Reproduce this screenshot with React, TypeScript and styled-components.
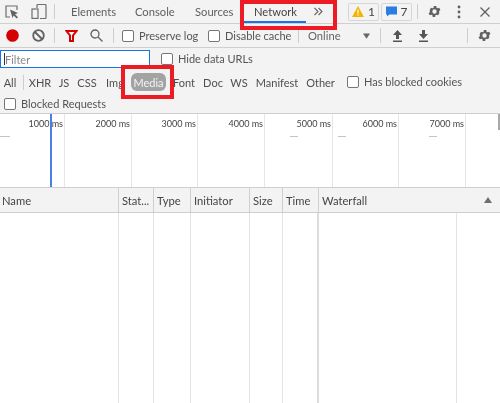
import React from "react";
import styled, { createGlobalStyle } from "styled-components";

const Global = createGlobalStyle`
  html, body { margin: 0; padding: 0; background: #fff; }
  body { font-family: Lato, "Open Sans", "Liberation Sans", sans-serif; font-size: 11px; color: #555; }
  * { box-sizing: border-box; }
`;

const Page = styled.div`
  position: relative;
  width: 500px;
  height: 403px;
  overflow: hidden;
  background: #fff;
  display: flex;
  flex-direction: column;
  filter: blur(0.3px);
`;

const Bar = styled.div`
  height: 24px;
  flex: none;
  display: flex;
  align-items: center;
  background: #f3f3f3;
  border-bottom: 1px solid #cfcfcf;
  overflow: hidden;
`;

const IconButton = styled.span<{ $w: number }>`
  width: ${(p) => p.$w}px;
  flex: none;
  display: flex;
  align-items: center;
  justify-content: center;
`;

const Sep = styled.span<{ $ml?: number; $mr?: number }>`
  width: 1px;
  height: 15px;
  flex: none;
  background: #cdcdcd;
  margin-left: ${(p) => p.$ml ?? 0}px;
  margin-right: ${(p) => p.$mr ?? 0}px;
`;

const Tab = styled.span<{ $w: number; $pad: number; $active?: boolean }>`
  width: ${(p) => p.$w}px;
  height: 23px;
  flex: none;
  display: flex;
  align-items: center;
  padding-left: ${(p) => p.$pad}px;
  padding-top: 2px;
  font-size: 11.2px;
  color: ${(p) => (p.$active ? "#444" : "#5f5f5f")};
  border-bottom: 2px solid ${(p) => (p.$active ? "#1a73e8" : "transparent")};
`;

const Spacer = styled.span<{ $w: number }>`
  width: ${(p) => p.$w}px;
  flex: none;
`;

const Badge = styled.span`
  width: 31px;
  height: 18px;
  flex: none;
  display: flex;
  align-items: center;
  justify-content: center;
  gap: 4px;
  border: 1px solid #d6d6d6;
  border-radius: 2px;
  margin-right: 2px;
  font-size: 12px;
  color: #444;
`;

const Check = styled.span`
  width: 12px;
  height: 12px;
  flex: none;
  border: 1px solid #767676;
  border-radius: 2px;
  background: #fff;
`;

const CheckLabel = styled.label<{ $w?: number; $ml?: number }>`
  display: flex;
  align-items: center;
  gap: 5px;
  flex: none;
  width: ${(p) => (p.$w ? `${p.$w}px` : "auto")};
  margin-left: ${(p) => p.$ml ?? 0}px;
  font-size: 11px;
  line-height: 16px;
  color: #555;
  white-space: nowrap;
`;

const Throttle = styled.span`
  width: 55px;
  margin-left: 9px;
  flex: none;
  font-size: 11.2px;
  color: #666;
`;

const Filters = styled.div`
  height: 66px;
  flex: none;
  background: #f3f3f3;
  border-bottom: 1px solid #cfcfcf;
  display: flex;
  flex-direction: column;
`;

const FilterRow = styled.div<{ $h: number; $pad?: number }>`
  height: ${(p) => p.$h}px;
  flex: none;
  display: flex;
  align-items: center;
  padding-left: ${(p) => p.$pad ?? 0}px;
`;

const FilterInput = styled.div`
  width: 150px;
  height: 18px;
  flex: none;
  display: flex;
  align-items: center;
  background: #fff;
  border: 1px solid #1a73e8;
  font-size: 11px;
  padding-left: 3px;
  color: #8a8a8a;
  margin-right: 11px;
`;

const Caret = styled.span`
  width: 1px;
  height: 12px;
  flex: none;
  background: #333;
`;

const Chip = styled.span<{ $w: number; $active?: boolean }>`
  width: ${(p) => p.$w}px;
  height: 18px;
  flex: none;
  display: flex;
  align-items: center;
  justify-content: center;
  font-size: 11px;
  white-space: nowrap;
  border-radius: 6px;
  color: ${(p) => (p.$active ? "#f4f4f4" : "#4f4f4f")};
  background: ${(p) => (p.$active ? "#a3a3a3" : "transparent")};
`;

const Overview = styled.div`
  height: 74px;
  flex: none;
  position: relative;
  display: flex;
  border-bottom: 1px solid #cfcfcf;
  background: #fff;
`;

const Tick = styled.div<{ $w: number }>`
  width: ${(p) => p.$w}px;
  flex: none;
  border-right: 1px solid #e6e6e6;
  text-align: right;
  padding: 3px 1px 0 0;
  font-size: 9px;
  line-height: 14px;
  color: #444;
`;

const Dash = styled.span<{ $x: number; $w: number }>`
  position: absolute;
  top: 22px;
  left: ${(p) => p.$x}px;
  width: ${(p) => p.$w}px;
  height: 1px;
  background: #c4c4c4;
`;

const Cursor = styled.div`
  position: absolute;
  left: 50px;
  top: 0;
  bottom: 0;
  width: 2px;
  background: #4a7fe8;
`;

const Thumb = styled.div`
  position: absolute;
  right: 0;
  top: 0;
  width: 2px;
  height: 16px;
  background: #a8a8a8;
`;

const Header = styled.div`
  height: 25px;
  flex: none;
  display: flex;
  background: #f3f3f3;
  border-bottom: 1px solid #cfcfcf;
`;

const HeaderCell = styled.div<{ $w: number; $pad?: number }>`
  width: ${(p) => p.$w}px;
  flex: none;
  display: flex;
  align-items: center;
  padding-left: ${(p) => p.$pad ?? 3}px;
  border-right: 1px solid #cfcfcf;
  font-size: 11.2px;
  color: #444;
  white-space: nowrap;
`;

const WaterfallCell = styled(HeaderCell)`
  position: relative;
  border-right: none;
`;

const SortMark = styled.span`
  position: absolute;
  right: 9px;
  top: 9px;
  width: 0;
  height: 0;
  border-left: 4px solid transparent;
  border-right: 4px solid transparent;
  border-bottom: 6px solid #6e6e6e;
`;

const Body = styled.div`
  flex: 1;
  display: flex;
`;

const BodyCol = styled.div<{ $w: number; $thick?: boolean }>`
  width: ${(p) => p.$w}px;
  flex: none;
  border-right: ${(p) => (p.$thick ? "2px solid #dcdcdc" : "1px solid #e4e4e4")};
`;

const RedBox = styled.div<{ $x: number; $y: number; $w: number; $h: number }>`
  position: absolute;
  left: ${(p) => p.$x}px;
  top: ${(p) => p.$y}px;
  width: ${(p) => p.$w}px;
  height: ${(p) => p.$h}px;
  border: 4px solid #ed1c24;
`;

const ticks = [
  { w: 65, label: "1000 ms" },
  { w: 67, label: "2000 ms" },
  { w: 66, label: "3000 ms" },
  { w: 67, label: "4000 ms" },
  { w: 68, label: "5000 ms" },
  { w: 66, label: "6000 ms" },
  { w: 67, label: "7000 ms" },
];

const cols = [
  { w: 119, label: "Name", pad: 2 },
  { w: 35, label: "Stat..." },
  { w: 37, label: "Type" },
  { w: 59, label: "Initiator" },
  { w: 33, label: "Size" },
  { w: 36, label: "Time" },
];

const chips = [
  { w: 26, label: "XHR" },
  { w: 22, label: "JS" },
  { w: 24, label: "CSS" },
  { w: 32, label: "Img" },
  { w: 35, label: "Media", active: true },
  { w: 36, label: "Font" },
  { w: 22, label: "Doc" },
  { w: 30, label: "WS" },
  { w: 46, label: "Manifest" },
  { w: 41, label: "Other" },
];

const Gear = () => (
  <svg width="15" height="15" viewBox="0 0 24 24" fill="#616161">
    <path d="M19.4 13a7.5 7.5 0 000-2l2.1-1.6-2-3.5-2.5 1a7.5 7.5 0 00-1.7-1l-.4-2.6h-4l-.4 2.6a7.5 7.5 0 00-1.7 1l-2.5-1-2 3.5L4.6 11a7.5 7.5 0 000 2l-2.1 1.6 2 3.5 2.5-1a7.5 7.5 0 001.7 1l.4 2.6h4l.4-2.6a7.5 7.5 0 001.7-1l2.5 1 2-3.5zM12 15.5a3.5 3.5 0 110-7 3.5 3.5 0 010 7z" />
  </svg>
);

export default function App() {
  return (
    <Page>
      <Global />
      <Bar>
        <IconButton $w={24}>
          <svg width="14" height="14" viewBox="0 0 14 14" fill="none">
            <path d="M5 12H1V1h11v4" stroke="#6e6e6e" strokeWidth="1.2" />
            <path d="M5 4.5l8 3.5-3 1.2 3 3-1.3 1.3-3-3L7.5 13z" fill="#5f6368" />
          </svg>
        </IconButton>
        <IconButton $w={30}>
          <svg width="16" height="15" viewBox="0 0 16 15" fill="none" stroke="#6e6e6e" strokeWidth="1.2">
            <path d="M6 4V1.5a1 1 0 011-1h7a1 1 0 011 1v12a1 1 0 01-1 1H9" />
            <rect x="1" y="5" width="6" height="9.4" />
          </svg>
        </IconButton>
        <Sep />
        <Tab $w={64} $pad={16}>Elements</Tab>
        <Tab $w={60} $pad={16}>Console</Tab>
        <Tab $w={65} $pad={16}>Sources</Tab>
        <Tab $w={62} $pad={10} $active>Network</Tab>
        <IconButton $w={24}>
          <svg width="9" height="9" viewBox="0 0 9 9" fill="none" stroke="#666" strokeWidth="1.1">
            <path d="M.5 1l3.5 3.5L.5 8M4.5 1L8 4.5 4.5 8" />
          </svg>
        </IconButton>
        <Spacer $w={18} />
        <Badge>
          <svg width="12" height="11" viewBox="0 0 12 11">
            <path d="M6 0l6 11H0z" fill="#f4b400" />
            <path d="M5.4 3.5h1.2v4H5.4zM5.4 8.3h1.2v1.2H5.4z" fill="#fff" />
          </svg>
          1
        </Badge>
        <Badge>
          <svg width="11" height="11" viewBox="0 0 11 11">
            <path d="M0 .5h11v8H3.5L1 10.5v-2H0z" fill="#2a7de1" />
          </svg>
          7
        </Badge>
        <Sep $ml={3} $mr={4} />
        <IconButton $w={24}><Gear /></IconButton>
        <IconButton $w={26}>
          <svg width="4" height="14" viewBox="0 0 4 14" fill="#616161">
            <circle cx="2" cy="2" r="1.4" />
            <circle cx="2" cy="7" r="1.4" />
            <circle cx="2" cy="12" r="1.4" />
          </svg>
        </IconButton>
        <IconButton $w={26}>
          <svg width="10" height="10" viewBox="0 0 10 10" stroke="#616161" strokeWidth="1.3">
            <path d="M.5.5l9 9M9.5.5l-9 9" />
          </svg>
        </IconButton>
      </Bar>
      <Bar>
        <IconButton $w={24}>
          <svg width="13" height="13" viewBox="0 0 13 13"><circle cx="6.5" cy="6.5" r="6.3" fill="#d50000" /></svg>
        </IconButton>
        <IconButton $w={28}>
          <svg width="13" height="13" viewBox="0 0 13 13" fill="none" stroke="#616161" strokeWidth="1.8">
            <circle cx="6.5" cy="6.5" r="5.3" />
            <path d="M3 3l7 7" />
          </svg>
        </IconButton>
        <Sep $ml={2} $mr={2} />
        <IconButton $w={28}>
          <svg width="13" height="12" viewBox="0 0 13 12" fill="none">
            <path d="M1.5 1h10L8 5.5V11H5V5.5z" stroke="#d50000" strokeWidth="2" />
          </svg>
        </IconButton>
        <IconButton $w={22}>
          <svg width="13" height="13" viewBox="0 0 13 13" fill="none" stroke="#616161" strokeWidth="1.3">
            <circle cx="5" cy="5" r="4" />
            <path d="M8 8l4.5 4.5" />
          </svg>
        </IconButton>
        <Sep $ml={6} $mr={8} />
        <CheckLabel $w={86}><Check />Preserve log</CheckLabel>
        <CheckLabel $w={90}><Check />Disable cache</CheckLabel>
        <Sep />
        <Throttle>Online</Throttle>
        <svg width="8" height="6" viewBox="0 0 8 6"><path d="M0 0h8L4 6z" fill="#666" /></svg>
        <Sep $ml={10} />
        <IconButton $w={32}>
          <svg width="11" height="12" viewBox="0 0 11 12" fill="#555"><path d="M5.5 0L10 5H7v4H4V5H1zM1 10.5h9V12H1z" /></svg>
        </IconButton>
        <IconButton $w={20}>
          <svg width="11" height="12" viewBox="0 0 11 12" fill="#555"><path d="M5.5 9L10 4H7V0H4v4H1zM1 10.5h9V12H1z" /></svg>
        </IconButton>
        <Sep $ml={34} />
        <IconButton $w={32}><Gear /></IconButton>
      </Bar>
      <Filters>
        <FilterRow $h={22}>
          <FilterInput><Caret />Filter</FilterInput>
          <CheckLabel><Check />Hide data URLs</CheckLabel>
        </FilterRow>
        <FilterRow $h={24}>
          <Chip $w={20}>All</Chip>
          <Sep $ml={3} $mr={3} />
          {chips.map((c) => (
            <Chip key={c.label} $w={c.w} $active={c.active}>{c.label}</Chip>
          ))}
          <CheckLabel $ml={6}><Check />Has blocked cookies</CheckLabel>
        </FilterRow>
        <FilterRow $h={19} $pad={4}>
          <CheckLabel><Check />Blocked Requests</CheckLabel>
        </FilterRow>
      </Filters>
      <Overview>
        {ticks.map((t) => (
          <Tick key={t.label} $w={t.w}>{t.label}</Tick>
        ))}
        <Dash $x={0} $w={10} />
        <Dash $x={290} $w={8} />
        <Dash $x={338} $w={8} />
        <Dash $x={429} $w={8} />
        <Cursor />
        <Thumb />
      </Overview>
      <Header>
        {cols.map((c) => (
          <HeaderCell key={c.label} $w={c.w} $pad={c.pad}>{c.label}</HeaderCell>
        ))}
        <WaterfallCell $w={182}>
          Waterfall
          <SortMark />
        </WaterfallCell>
      </Header>
      <Body>
        {cols.map((c, i) => (
          <BodyCol key={c.label} $w={c.w} $thick={i === 5} />
        ))}
        <BodyCol $w={138} />
      </Body>
      <RedBox $x={240} $y={0} $w={97} $h={30} />
      <RedBox $x={121} $y={65} $w={53} $h={34} />
    </Page>
  );
}
